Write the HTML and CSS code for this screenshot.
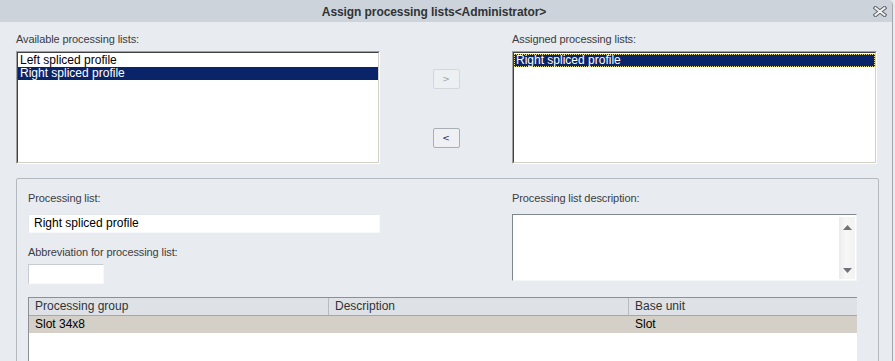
FILE: index.html
```html
<!DOCTYPE html>
<html>
<head>
<meta charset="utf-8">
<link rel="stylesheet" href="styles.css">
</head>
<body>
<div class="window">
  <div class="titlebar">
    <span class="title">Assign processing lists&lt;Administrator&gt;</span>
    <svg class="close" width="14" height="11" viewBox="0 0 14 11">
      <path d="M2.5 2 L11.5 9 M11.5 2 L2.5 9" stroke="#5a5f66" stroke-width="4" stroke-linecap="square" fill="none"/>
      <path d="M2.5 2 L11.5 9 M11.5 2 L2.5 9" stroke="#eef0f2" stroke-width="2" stroke-linecap="square" fill="none"/>
    </svg>
  </div>
  <div class="content">
    <div class="top">
      <div class="col col-left">
        <div class="label">Available processing lists:</div>
        <div class="listbox">
          <div class="listinner">
            <div class="item">Left spliced profile</div>
            <div class="item sel">Right spliced profile</div>
          </div>
        </div>
      </div>
      <div class="col col-mid">
        <button class="btn disabled">&gt;</button>
        <button class="btn">&lt;</button>
      </div>
      <div class="col col-right">
        <div class="label">Assigned processing lists:</div>
        <div class="listbox">
          <div class="listinner">
            <div class="item sel focus">Right spliced profile</div>
          </div>
        </div>
      </div>
    </div>
    <div class="group">
      <div class="fields">
        <div class="fcol fcol-left">
          <div class="label">Processing list:</div>
          <div class="input wide">Right spliced profile</div>
          <div class="label label-abbr">Abbreviation for processing list:</div>
          <div class="input small"></div>
        </div>
        <div class="fcol fcol-right">
          <div class="label">Processing list description:</div>
          <div class="textarea">
            <div class="tbody"></div>
            <div class="scrollbar">
              <svg width="9" height="5" viewBox="0 0 9 5"><path d="M0 5 L4.5 0 L9 5 Z" fill="#6f7377"/></svg>
              <svg width="9" height="5" viewBox="0 0 9 5"><path d="M0 0 L9 0 L4.5 5 Z" fill="#6f7377"/></svg>
            </div>
          </div>
        </div>
      </div>
      <div class="table">
        <div class="thead">
          <div class="th c1">Processing group</div>
          <div class="th c2">Description</div>
          <div class="th c3">Base unit</div>
        </div>
        <div class="tr">
          <div class="td c1">Slot 34x8</div>
          <div class="td c2"></div>
          <div class="td c3">Slot</div>
        </div>
      </div>
    </div>
  </div>
</div>
</body>
</html>
```

FILE: styles.css
```css
html, body {
  margin: 0;
  padding: 0;
}
body {
  width: 895px;
  height: 361px;
  overflow: hidden;
  background: #e8ebef;
  font-family: "Liberation Sans", Arial, sans-serif;
}
.window {
  width: 892px;
  height: 361px;
  border-right: 1px solid #a3a8ae;
  border-top-right-radius: 5px;
  background: #e8ebef;
  overflow: hidden;
}
.titlebar {
  height: 22px;
  background: #cdd3da;
  display: flex;
  align-items: center;
  justify-content: center;
  position: relative;
}
.title {
  font-weight: bold;
  font-size: 12px;
  letter-spacing: -0.08px;
  color: #2f3338;
  margin-right: 24px;
  margin-top: 1px;
}
.close {
  position: absolute;
  right: 5px;
  top: 6px;
}
.content {
  padding: 10px 0 0 16px;
}
.top {
  display: flex;
}
.label {
  font-size: 11px;
  line-height: 14px;
  height: 14px;
  color: #3a3d42;
  letter-spacing: -0.1px;
}
.col-left .label,
.col-right .label {
  margin-bottom: 5px;
}
.col-left {
  width: 364px;
}
.col-mid {
  width: 132px;
  display: flex;
  flex-direction: column;
  align-items: center;
  padding-top: 37px;
}
.col-right {
  width: 365px;
}
.listbox {
  height: 113px;
  box-sizing: border-box;
  border: 1px solid;
  border-color: #a0a0a0 #ffffff #ffffff #a0a0a0;
  background: #fff;
}
.listinner {
  height: 100%;
  box-sizing: border-box;
  border: 1px solid;
  border-color: #404040 #d4d0c8 #d4d0c8 #404040;
  padding-top: 1px;
}
.item {
  font-size: 12px;
  line-height: 13px;
  height: 13px;
  padding-left: 2px;
  color: #000;
  white-space: nowrap;
}
.item.sel {
  background: #0a246a;
  color: #fff;
}
.item.focus {
  box-sizing: border-box;
  border: 1px dotted #e8dc8c;
  line-height: 11px;
  padding-left: 1px;
}
.btn {
  width: 27px;
  height: 20px;
  box-sizing: border-box;
  padding: 0;
  margin: 0;
  border: 1px solid #a9aeb4;
  border-radius: 2px;
  background: #eef0f3;
  font-family: "DejaVu Sans", sans-serif;
  font-size: 9px;
  color: #1a2a50;
  line-height: 18px;
}
.btn.disabled {
  border-color: #d4d8dd;
  background: #edf0f3;
  color: #9aa3ae;
  margin-bottom: 39px;
}
.group {
  margin-top: 14px;
  width: 863px;
  height: 200px;
  box-sizing: border-box;
  border: 1px solid #b4b9c0;
  border-radius: 2px;
  padding: 12px 0 0 11px;
}
.fields {
  display: flex;
}
.fcol-left {
  width: 352px;
}
.fcol-right {
  margin-left: 132px;
  width: 345px;
}
.input {
  box-sizing: border-box;
  background: #fff;
  font-size: 12px;
  color: #000;
  line-height: 17px;
  padding-left: 5px;
  margin-top: 9px;
}
.input.wide {
  width: 352px;
  height: 19px;
  border: 1px solid;
  border-color: #e4e7eb #f7f8f9 #f7f8f9 #e4e7eb;
}
.label-abbr {
  margin-top: 12px;
}
.input.small {
  width: 76px;
  height: 20px;
  margin-top: 5px;
  border: 1px solid;
  border-color: #c8ccd2 #f7f8f9 #f7f8f9 #c8ccd2;
}
.textarea {
  margin-top: 9px;
  height: 67px;
  box-sizing: border-box;
  border-top: 1px solid #7f868e;
  border-left: 1px solid #7f868e;
  border-right: 1px solid #f4f5f6;
  border-bottom: 1px solid #f4f5f6;
  background: #fff;
  display: flex;
}
.tbody {
  flex: 1;
}
.scrollbar {
  width: 16px;
  margin: 2px 1px 1px 0;
  background: linear-gradient(to right, #ebebeb, #f7f7f7 40%, #f2f2f2);
  display: flex;
  flex-direction: column;
  justify-content: space-between;
  align-items: center;
  padding: 8px 0 6px;
  box-sizing: border-box;
}
.scrollbar svg {
  display: block;
}
.table {
  margin-top: 13px;
  width: 828px;
  height: 80px;
  border-top: 1px solid #8c9096;
  border-left: 1px solid #8c9096;
  background: #fff;
}
.thead,
.tr {
  display: flex;
  height: 17px;
}
.thead {
  background: #dee2e7;
  border-bottom: 1px solid #a4a8ad;
}
.tr {
  background: #d4d0c8;
}
.th,
.td {
  font-size: 12px;
  line-height: 17px;
  padding-left: 6px;
  box-sizing: border-box;
  white-space: nowrap;
}
.th {
  color: #2e3338;
}
.td {
  color: #000;
}
.c1 { width: 300px; }
.c2 { width: 300px; }
.c3 { flex: 1; }
.th.c1, .th.c2 {
  border-right: 1px solid #b8bcc1;
}
.td.c1, .td.c2 {
  border-right: 1px solid transparent;
}
```
